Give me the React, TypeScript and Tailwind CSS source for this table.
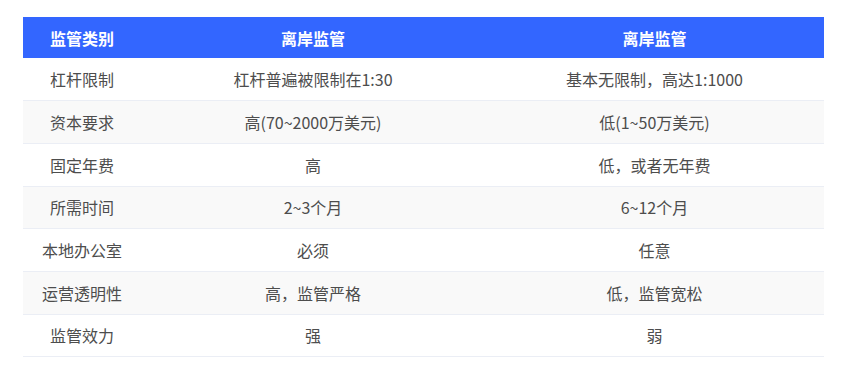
const rows = [
  ["杠杆限制", "杠杆普遍被限制在1:30", "基本无限制，高达1:1000"],
  ["资本要求", "高(70~2000万美元)", "低(1~50万美元)"],
  ["固定年费", "高", "低，或者无年费"],
  ["所需时间", "2~3个月", "6~12个月"],
  ["本地办公室", "必须", "任意"],
  ["运营透明性", "高，监管严格", "低，监管宽松"],
  ["监管效力", "强", "弱"],
];

export default function App() {
  return (
    <div className="min-h-[372px] bg-white pt-[17px] pl-[23px] font-['Noto_Sans_CJK_SC','Noto_Sans',sans-serif]">
      <table className="w-[801px] table-fixed border-collapse text-[16px]">
        <colgroup>
          <col className="w-[118px]" />
          <col className="w-[344px]" />
          <col className="w-[339px]" />
        </colgroup>
        <thead>
          <tr className="h-[41px] bg-[#3366ff] text-white">
            <th className="font-bold">监管类别</th>
            <th className="font-bold">离岸监管</th>
            <th className="font-bold">离岸监管</th>
          </tr>
        </thead>
        <tbody className="text-[#4d4d4d]">
          {rows.map((r, i) => (
            <tr
              key={r[0]}
              className={`h-[42.7px] border-b border-[#ebeef5] ${i % 2 ? "bg-[#f9f9f9]" : "bg-white"}`}
            >
              {r.map((c, j) => (
                <td key={j} className="p-0 text-center">
                  {c}
                </td>
              ))}
            </tr>
          ))}
        </tbody>
      </table>
    </div>
  );
}
